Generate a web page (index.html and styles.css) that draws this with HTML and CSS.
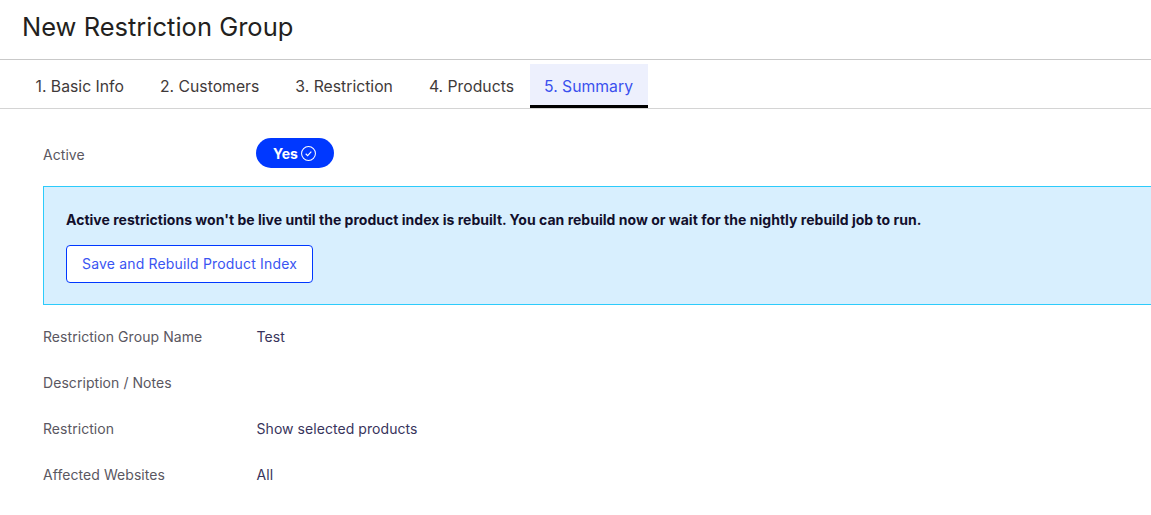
FILE: index.html
```html
<!DOCTYPE html>
<html>
<head>
    <meta charset="UTF-8">
    <title>New Restriction Group</title>
    <link rel="stylesheet" href="styles.css">
</head>
<body>
    <header class="page-header">
        <h1>New Restriction Group</h1>
    </header>
    <nav class="tabs">
        <a class="tab">1. Basic Info</a>
        <a class="tab">2. Customers</a>
        <a class="tab">3. Restriction</a>
        <a class="tab">4. Products</a>
        <a class="tab tab-active">5. Summary</a>
    </nav>
    <main class="content">
        <div class="row row-active">
            <span class="label">Active</span>
            <span class="toggle">Yes
                <svg class="toggle-icon" viewBox="0 0 16 16" width="15" height="15" fill="none" stroke="#fff">
                    <circle cx="8" cy="8" r="7.4" stroke-width="1.1"/>
                    <path d="M5 8.3l2.1 2 3.9-4.2" stroke-width="1.2"/>
                </svg>
            </span>
        </div>
        <section class="notice">
            <p>Active restrictions won't be live until the product index is rebuilt. You can rebuild now or wait for the nightly rebuild job to run.</p>
            <button type="button" class="btn-outline">Save and Rebuild Product Index</button>
        </section>
        <div class="row"><span class="label">Restriction Group Name</span><span class="value">Test</span></div>
        <div class="row"><span class="label">Description / Notes</span><span class="value"></span></div>
        <div class="row"><span class="label">Restriction</span><span class="value">Show selected products</span></div>
        <div class="row"><span class="label">Affected Websites</span><span class="value">All</span></div>
    </main>
</body>
</html>
```

FILE: styles.css
```css
body {
    margin: 0;
    background-color: #ffffff;
    font-family: Inter, "Liberation Sans", sans-serif;
    font-size: 14px;
    color: #1f1a2e;
}
.page-header {
    height: 59px;
    border-bottom: 1px solid #c9c9c9;
    padding-left: 22px;
}
h1 {
    margin: 0;
    font-size: 25.5px;
    font-weight: 400;
    line-height: 54px;
    color: #231f20;
}
.tabs {
    display: flex;
    height: 44px;
    padding: 4px 0 0 21px;
    border-bottom: 1px solid #d4d4d4;
}
.tab {
    padding: 0 14.5px;
    margin-right: 7px;
    font-size: 15.75px;
    line-height: 45px;
    color: #3f3a3a;
    box-sizing: border-box;
}
.tab-active {
    margin-left: -5.5px;
    margin-right: 0;
    padding: 0 15px 0 14px;
    background-color: #edf0fd;
    border-bottom: 3px solid #000000;
    color: #3a50ee;
}
.content {
    display: flex;
    flex-direction: column;
    padding-left: 43px;
}
.row {
    display: grid;
    grid-template-columns: 213.5px 1fr;
    align-items: center;
    height: 46px;
    letter-spacing: 0.06px;
}
.row-active {
    height: 32px;
    margin-top: 28px;
    margin-bottom: 17px;
}
.label {
    color: #5a5761;
}
.row-active .label {
    padding-top: 3px;
}
.value {
    color: #38345c;
}
.toggle {
    display: inline-flex;
    align-items: center;
    justify-content: center;
    gap: 3px;
    width: 78px;
    height: 30px;
    margin-left: -1px;
    border-radius: 15px;
    background-color: #0038ff;
    color: #ffffff;
    font-weight: 700;
    white-space: nowrap;
}
.notice {
    height: 119px;
    box-sizing: border-box;
    margin-bottom: 8px;
    padding: 24px 22px 0;
    background-color: #d8effe;
    border: 1px solid #2ccbfb;
    border-right: none;
}
.notice p {
    margin: 0 0 17px;
    font-weight: 700;
    line-height: 17px;
    letter-spacing: 0.02px;
    color: #120f2c;
}
.btn-outline {
    display: block;
    width: 247px;
    height: 38px;
    padding: 0 0 2px;
    background-color: #ffffff;
    border: 1px solid #0038ff;
    border-radius: 4px;
    font-family: inherit;
    font-size: 14px;
    letter-spacing: 0.17px;
    color: #3a55f2;
}
```
